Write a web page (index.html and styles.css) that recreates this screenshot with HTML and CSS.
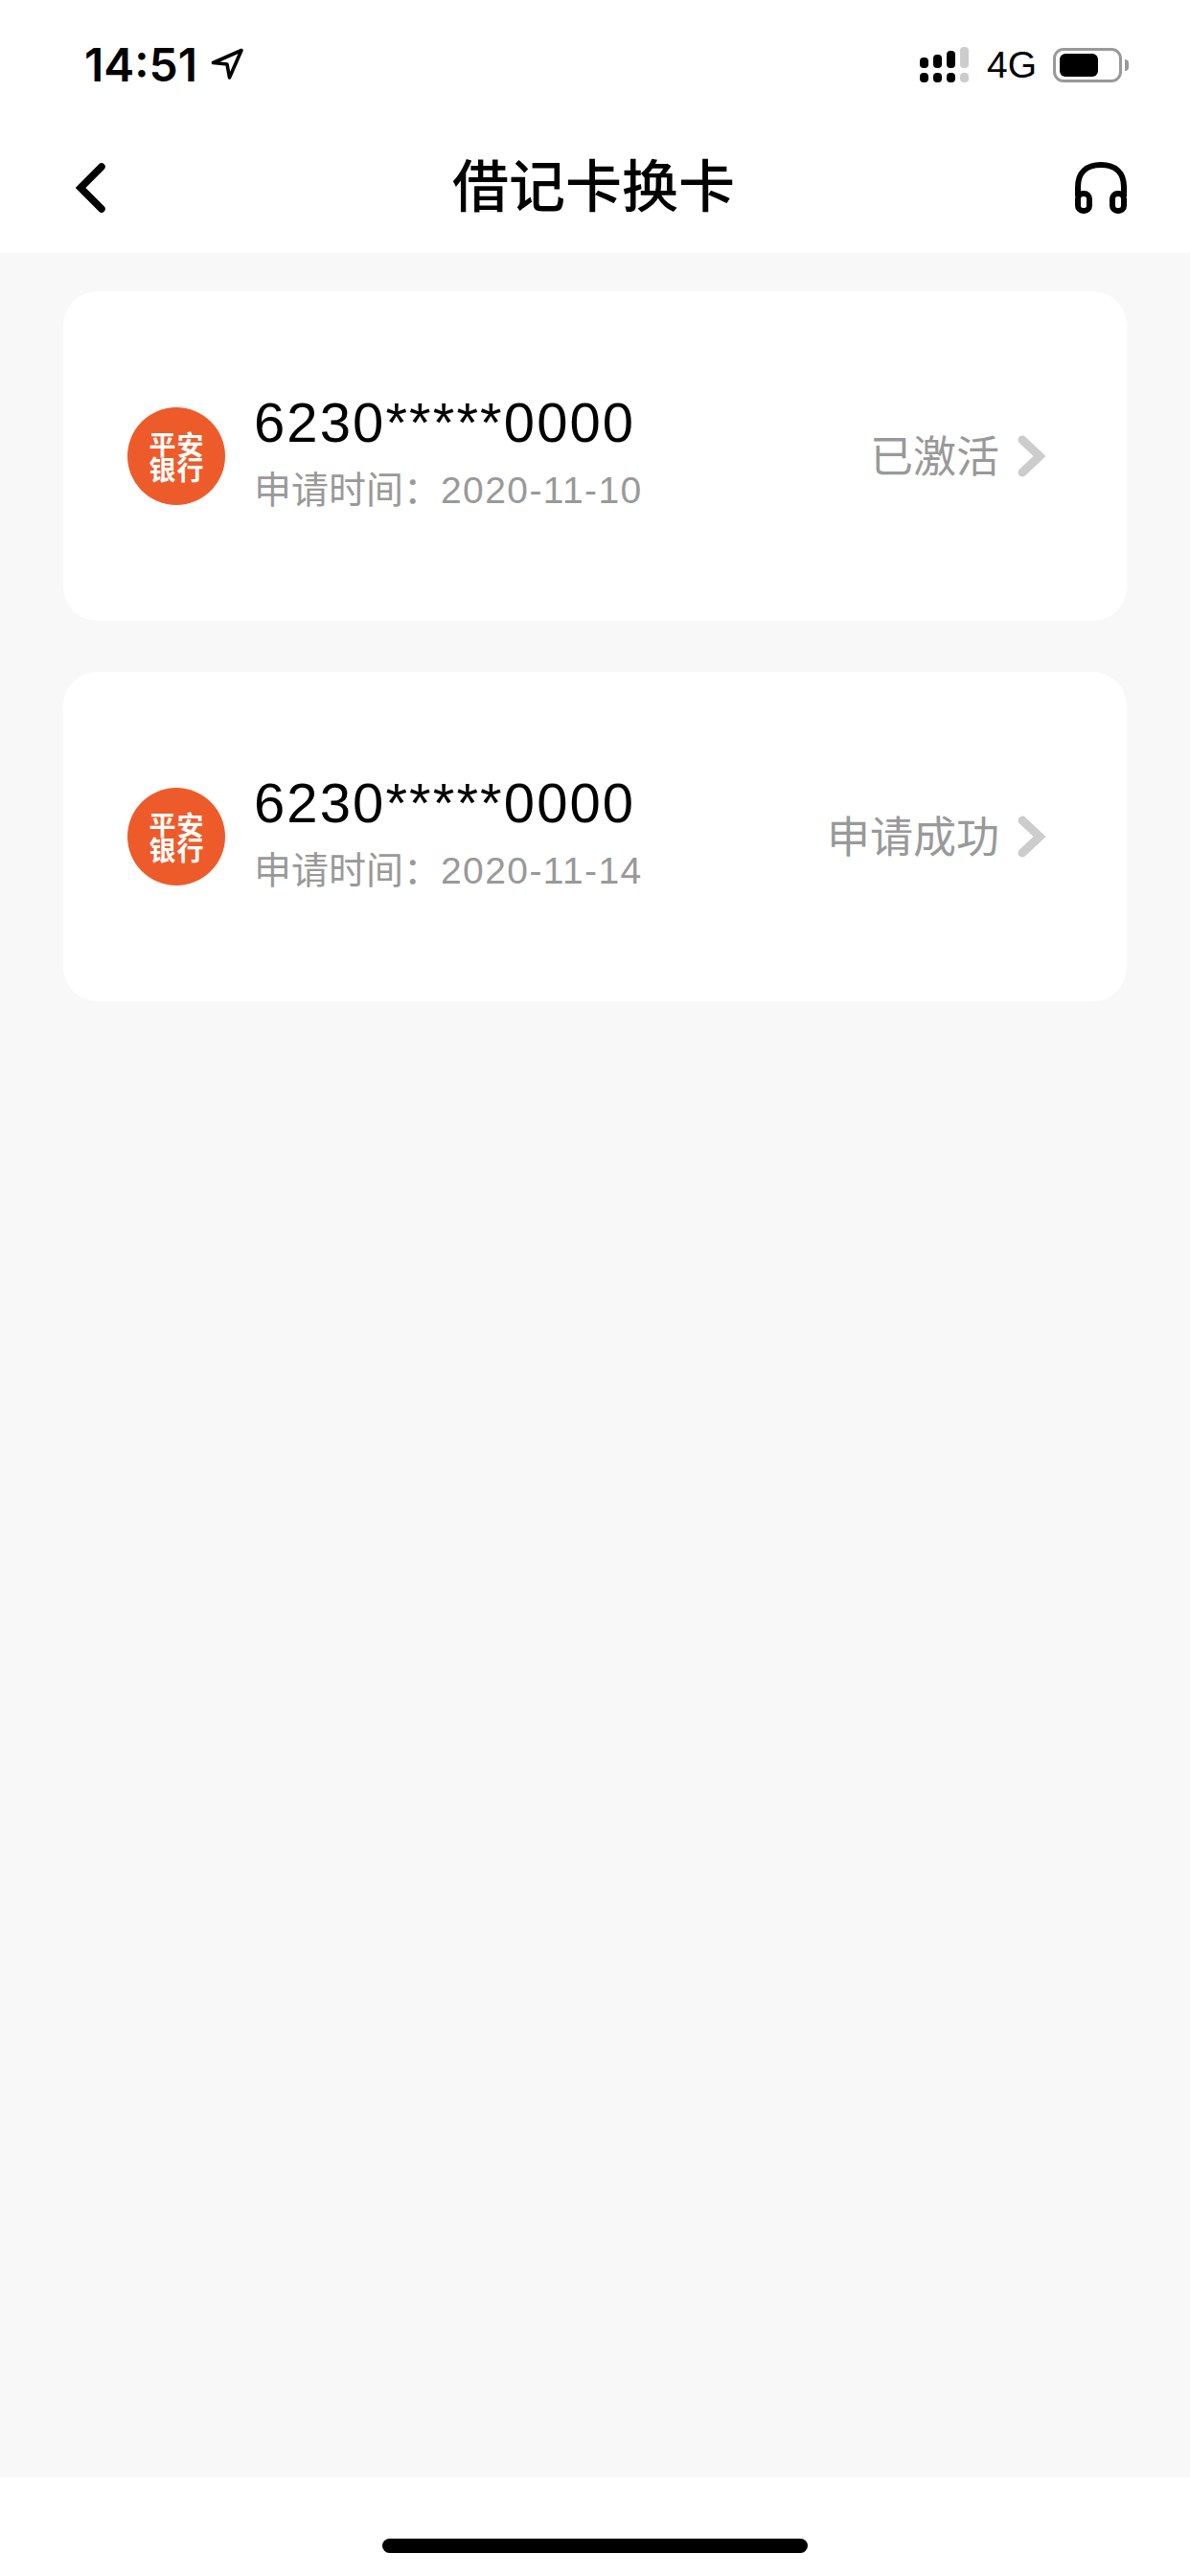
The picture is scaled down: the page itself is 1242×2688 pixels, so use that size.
FILE: index.html
```html
<!DOCTYPE html>
<html lang="zh-CN">
<head>
    <meta charset="UTF-8">
    <meta name="viewport" content="width=device-width, initial-scale=1.0">
    <title>借记卡换卡</title>
    <link rel="stylesheet" href="styles.css">
</head>
<body>
    <div class="status-bar">
        <div class="status-left">
            <span class="time">14:51</span>
            <svg class="location" width="34" height="34" viewBox="0 0 34 34">
                <path d="M2.5 16.5L32 3.5L19.5 32L17 18Z" fill="none" stroke="#000" stroke-width="3.6" stroke-linejoin="round"/>
            </svg>
        </div>
        <div class="status-right">
            <svg class="signal" width="51" height="37" viewBox="0 0 51 37">
                <rect x="0" y="11" width="9" height="11" rx="4" fill="#000"/>
                <rect x="14" y="8" width="9" height="14" rx="4" fill="#000"/>
                <rect x="28" y="4" width="9" height="18" rx="4" fill="#000"/>
                <rect x="42" y="0" width="9" height="22" rx="4" fill="#ccc"/>
                <rect x="0" y="27" width="9" height="10" rx="4" fill="#000"/>
                <rect x="14" y="27" width="9" height="10" rx="4" fill="#000"/>
                <rect x="28" y="27" width="9" height="10" rx="4" fill="#000"/>
                <rect x="42" y="27" width="9" height="10" rx="4" fill="#ccc"/>
            </svg>
            <span class="network">4G</span>
            <div class="battery">
                <div class="battery-level"></div>
            </div>
            <div class="battery-cap"></div>
        </div>
    </div>

    <header class="nav">
        <svg class="back" width="32" height="52" viewBox="0 0 32 52">
            <path d="M27 4L5 26L27 48" fill="none" stroke="#000" stroke-width="7.5" stroke-linecap="round" stroke-linejoin="miter"/>
        </svg>
        <h1 class="nav-title">借记卡换卡</h1>
        <svg class="headset" width="54" height="54" viewBox="0 0 54 54">
            <path d="M3 36V26C3 11 12 3 27 3S51 11 51 26V36" fill="none" stroke="#000" stroke-width="6"/>
            <rect x="3" y="33" width="12" height="18" rx="5.5" fill="none" stroke="#000" stroke-width="6"/>
            <rect x="39" y="33" width="12" height="18" rx="5.5" fill="none" stroke="#000" stroke-width="6"/>
        </svg>
    </header>

    <main class="card-list">
        <div class="card">
            <div class="bank-logo">平安<br>银行</div>
            <div class="card-info">
                <div class="card-number">6230*****0000</div>
                <div class="card-date">申请时间：<span class="date-value">2020-11-10</span></div>
            </div>
            <div class="card-status">已激活</div>
            <svg class="chevron" width="30" height="44" viewBox="0 0 30 44">
                <path d="M5 5L23 22L5 39" fill="none" stroke="#ccc" stroke-width="9" stroke-linecap="round"/>
            </svg>
        </div>
        <div class="card">
            <div class="bank-logo">平安<br>银行</div>
            <div class="card-info">
                <div class="card-number">6230*****0000</div>
                <div class="card-date">申请时间：<span class="date-value">2020-11-14</span></div>
            </div>
            <div class="card-status">申请成功</div>
            <svg class="chevron" width="30" height="44" viewBox="0 0 30 44">
                <path d="M5 5L23 22L5 39" fill="none" stroke="#ccc" stroke-width="9" stroke-linecap="round"/>
            </svg>
        </div>
    </main>

    <footer class="home-area">
        <div class="home-bar"></div>
    </footer>
</body>
</html>
```

FILE: styles.css
```css
html, body {
    margin: 0;
    padding: 0;
}
body {
    width: 1242px;
    height: 2688px;
    display: flex;
    flex-direction: column;
    background-color: #fff;
    color: #000;
    font-family: "Liberation Sans", "Noto Sans CJK SC", sans-serif;
}
.status-bar {
    height: 136px;
    box-sizing: border-box;
    padding: 46px 64px 0 88px;
    display: flex;
    justify-content: space-between;
    align-items: flex-start;
}
.status-left {
    display: flex;
    align-items: center;
    gap: 14px;
}
.time {
    font-family: Inter, "Liberation Sans", sans-serif;
    font-size: 48px;
    font-weight: 600;
    line-height: 44px;
}
.location {
    margin-top: -4px;
}
.status-right {
    display: flex;
    align-items: center;
    margin-top: 3px;
}
.network {
    font-size: 39px;
    line-height: 36px;
    margin-left: 19px;
}
.battery {
    width: 72px;
    height: 36px;
    box-sizing: border-box;
    margin-left: 17px;
    padding: 3px 4px;
    border: 3px solid #999;
    border-radius: 11px;
}
.battery-level {
    width: 40px;
    height: 24px;
    background-color: #000;
    border-radius: 6px;
}
.battery-cap {
    width: 4px;
    height: 12px;
    margin-left: 3px;
    background-color: #999;
    border-radius: 0 6px 6px 0;
}
.nav {
    height: 128px;
    box-sizing: border-box;
    padding: 0 66px 8px 79px;
    display: flex;
    justify-content: space-between;
    align-items: center;
}
.nav-title {
    margin: 0 0 10px 6px;
    font-family: "Noto Sans CJK SC", sans-serif;
    font-size: 59px;
    font-weight: 500;
    line-height: 80px;
}
.card-list {
    flex: 1;
    padding: 40px 66px 0;
    display: flex;
    flex-direction: column;
    gap: 53px;
    background-color: #f8f8f8;
}
.card {
    height: 344px;
    box-sizing: border-box;
    padding: 0 84px 0 67px;
    display: flex;
    align-items: center;
    background-color: #fff;
    border-radius: 36px;
}
.bank-logo {
    width: 102px;
    height: 102px;
    margin-right: 30px;
    box-sizing: border-box;
    padding-left: 1px;
    display: flex;
    flex-direction: column;
    align-items: center;
    justify-content: center;
    flex-shrink: 0;
    text-align: center;
    background-color: #ee5b2a;
    border-radius: 50%;
    color: #fff;
    font-family: "Noto Sans CJK SC", sans-serif;
    font-size: 28px;
    font-weight: 700;
    line-height: 26px;
    letter-spacing: 1px;
}
.card-info {
    flex: 1;
    margin-top: -6px;
}
.card-number {
    font-size: 58px;
    line-height: 64px;
    letter-spacing: 2.1px;
}
.card-date {
    margin-top: 14px;
    font-size: 39px;
    line-height: 50px;
    color: #999;
}
.date-value {
    letter-spacing: 1.4px;
}
.card-status {
    margin-bottom: 4px;
    font-family: "Noto Sans CJK SC", sans-serif;
    font-size: 45px;
    line-height: 60px;
    color: #999;
}
.chevron {
    margin-left: 19px;
}
.home-area {
    height: 103px;
    box-sizing: border-box;
    padding-top: 64px;
    display: flex;
    justify-content: center;
    align-items: flex-start;
}
.home-bar {
    width: 444px;
    height: 15px;
    background-color: #000;
    border-radius: 8px;
}
```
